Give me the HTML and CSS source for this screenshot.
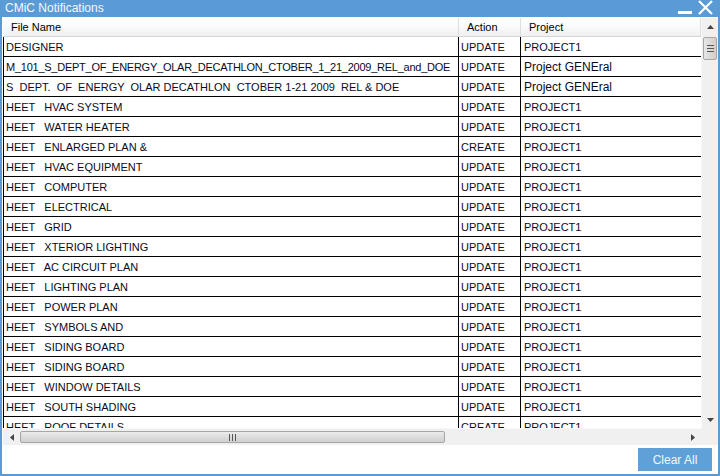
FILE: index.html
```html
<!DOCTYPE html>
<html>
<head>
<meta charset="utf-8">
<link rel="stylesheet" href="styles.css">
</head>
<body>
<div class="window">
  <div class="titlebar">
    <span class="title">CMiC Notifications</span>
    <div class="controls">
      <span class="min"></span>
      <svg class="close" width="15" height="15" viewBox="0 0 15 15"><path d="M1 1 L14 14 M14 1 L1 14" stroke="#fff" stroke-width="2.2" fill="none"/></svg>
    </div>
  </div>
  <div class="content">
    <div class="gridarea">
      <div class="list">
        <div class="head">
          <div class="hc c1">File Name</div>
          <div class="hc c2">Action</div>
          <div class="hc c3">Project</div>
        </div>
        <div class="rows">
          <div class="row"><div class="cell">DESIGNER</div><div class="cell">UPDATE</div><div class="cell">PROJECT1</div></div>
          <div class="row"><div class="cell tight">M_101_S_DEPT_OF_ENERGY_OLAR_DECATHLON_CTOBER_1_21_2009_REL_and_DOE</div><div class="cell">UPDATE</div><div class="cell gen">Project GENEral</div></div>
          <div class="row"><div class="cell">S  DEPT.  OF  ENERGY  OLAR DECATHLON  CTOBER 1-21 2009  REL &amp; DOE</div><div class="cell">UPDATE</div><div class="cell gen">Project GENEral</div></div>
          <div class="row"><div class="cell">HEET   HVAC SYSTEM</div><div class="cell">UPDATE</div><div class="cell">PROJECT1</div></div>
          <div class="row"><div class="cell">HEET   WATER HEATER</div><div class="cell">UPDATE</div><div class="cell">PROJECT1</div></div>
          <div class="row"><div class="cell">HEET   ENLARGED PLAN &amp;</div><div class="cell">CREATE</div><div class="cell">PROJECT1</div></div>
          <div class="row"><div class="cell">HEET   HVAC EQUIPMENT</div><div class="cell">UPDATE</div><div class="cell">PROJECT1</div></div>
          <div class="row"><div class="cell">HEET   COMPUTER</div><div class="cell">UPDATE</div><div class="cell">PROJECT1</div></div>
          <div class="row"><div class="cell">HEET   ELECTRICAL</div><div class="cell">UPDATE</div><div class="cell">PROJECT1</div></div>
          <div class="row"><div class="cell">HEET   GRID</div><div class="cell">UPDATE</div><div class="cell">PROJECT1</div></div>
          <div class="row"><div class="cell">HEET   XTERIOR LIGHTING</div><div class="cell">UPDATE</div><div class="cell">PROJECT1</div></div>
          <div class="row"><div class="cell">HEET   AC CIRCUIT PLAN</div><div class="cell">UPDATE</div><div class="cell">PROJECT1</div></div>
          <div class="row"><div class="cell">HEET   LIGHTING PLAN</div><div class="cell">UPDATE</div><div class="cell">PROJECT1</div></div>
          <div class="row"><div class="cell">HEET   POWER PLAN</div><div class="cell">UPDATE</div><div class="cell">PROJECT1</div></div>
          <div class="row"><div class="cell">HEET   SYMBOLS AND</div><div class="cell">UPDATE</div><div class="cell">PROJECT1</div></div>
          <div class="row"><div class="cell">HEET   SIDING BOARD</div><div class="cell">UPDATE</div><div class="cell">PROJECT1</div></div>
          <div class="row"><div class="cell">HEET   SIDING BOARD</div><div class="cell">UPDATE</div><div class="cell">PROJECT1</div></div>
          <div class="row"><div class="cell">HEET   WINDOW DETAILS</div><div class="cell">UPDATE</div><div class="cell">PROJECT1</div></div>
          <div class="row"><div class="cell">HEET   SOUTH SHADING</div><div class="cell">UPDATE</div><div class="cell">PROJECT1</div></div>
          <div class="row"><div class="cell">HEET   ROOF DETAILS</div><div class="cell">CREATE</div><div class="cell">PROJECT1</div></div>
        </div>
      </div>
      <div class="vscroll">
        <div class="arrow"><svg width="7" height="4" viewBox="0 0 7 4"><path d="M0 4 L3.5 0 L7 4 Z" fill="#444"/></svg></div>
        <div class="vtrack">
          <div class="vthumb"><span class="grip"></span><span class="grip"></span><span class="grip"></span></div>
        </div>
        <div class="arrow"><svg width="7" height="4" viewBox="0 0 7 4"><path d="M0 0 L3.5 4 L7 0 Z" fill="#444"/></svg></div>
      </div>
      <div class="hscroll">
        <div class="harrow"><svg width="4" height="7" viewBox="0 0 4 7"><path d="M4 0 L0 3.5 L4 7 Z" fill="#444"/></svg></div>
        <div class="htrack">
          <div class="hthumb"><span class="hgrip"></span><span class="hgrip"></span><span class="hgrip"></span></div>
        </div>
        <div class="harrow"><svg width="4" height="7" viewBox="0 0 4 7"><path d="M0 0 L4 3.5 L0 7 Z" fill="#444"/></svg></div>
      </div>
      <div class="corner"></div>
    </div>
    <div class="footer">
      <button class="clear">Clear All</button>
    </div>
  </div>
</div>
</body>
</html>
```
FILE: styles.css
```css
html, body {
  margin: 0;
  padding: 0;
}
body {
  width: 720px;
  height: 476px;
  overflow: hidden;
  font-family: "Liberation Sans", Arial, sans-serif;
}
.window {
  width: 720px;
  height: 476px;
  box-sizing: border-box;
  background: #5a9bd6;
  padding: 0 2px 2px 2px;
  display: flex;
  flex-direction: column;
}
.titlebar {
  height: 17px;
  display: flex;
  align-items: center;
  justify-content: space-between;
  color: #fff;
}
.title {
  font-size: 12px;
  line-height: 17px;
  padding-left: 3px;
  color: #f4f8fc;
}
.controls {
  display: flex;
  align-items: flex-start;
  height: 17px;
  gap: 6px;
  padding-right: 5px;
}
.min {
  display: block;
  width: 14px;
  height: 3px;
  background: #fff;
  margin-top: 11px;
}
.close {
  display: block;
  margin-top: 0px;
}
.content {
  flex: 1;
  background: #fff;
  padding-top: 1px;
  padding-left: 1px;
  display: flex;
  flex-direction: column;
  min-height: 0;
}
.gridarea {
  display: grid;
  grid-template-columns: 698px 17px;
  grid-template-rows: 410px 17px;
}
.list {
  overflow: hidden;
  font-size: 11px;
  color: #000;
}
.head {
  display: grid;
  grid-template-columns: 456px 62px 180px;
  height: 19px;
  box-sizing: border-box;
  background: linear-gradient(#ffffff, #fafafa 50%, #eef0f2);
  border-bottom: 1px solid #d6d6d6;
}
.hc {
  line-height: 17px;
  padding-top: 1px;
  padding-left: 8px;
  border-right: 1px solid #dedede;
  white-space: nowrap;
  overflow: hidden;
}
.rows {
  border-left: 1px solid #000;
}
.row {
  display: grid;
  grid-template-columns: 455px 62px 180px;
  height: 20px;
  box-sizing: border-box;
  border-bottom: 1px solid #000;
}
.cell {
  line-height: 18px;
  padding-top: 1px;
  padding-left: 2px;
  white-space: pre;
  overflow: hidden;
  border-right: 1px solid #000;
  color: #0a0a1e;
}
.cell.tight {
  letter-spacing: -0.25px;
}
.cell:last-child {
  border-right: none;
  padding-left: 3px;
}
.cell.gen {
  font-size: 12px;
}
.vscroll {
  background: #f0f0f0;
  display: flex;
  flex-direction: column;
  border-left: 1px solid #f8f8f8;
}
.arrow {
  height: 17px;
  display: flex;
  align-items: center;
  justify-content: center;
}
.vtrack {
  flex: 1;
  padding: 2px 1px;
}
.vthumb {
  height: 23px;
  box-sizing: border-box;
  border: 1px solid #a6a6a6;
  border-radius: 2px;
  background: linear-gradient(90deg, #e6e6e6, #dadada 50%, #cfcfcf);
  display: flex;
  flex-direction: column;
  justify-content: center;
  align-items: center;
  gap: 2px;
}
.grip {
  display: block;
  width: 7px;
  height: 1px;
  background: #555;
}
.hscroll {
  background: #f0f0f0;
  display: flex;
  border-top: 1px solid #f8f8f8;
}
.harrow {
  width: 17px;
  display: flex;
  align-items: center;
  justify-content: center;
}
.htrack {
  flex: 1;
  padding: 2px 0;
}
.hthumb {
  width: 425px;
  height: 100%;
  box-sizing: border-box;
  border: 1px solid #a6a6a6;
  border-radius: 2px;
  background: linear-gradient(#ececec, #dcdcdc 50%, #d0d0d0);
  display: flex;
  justify-content: center;
  align-items: center;
  gap: 2px;
}
.hgrip {
  display: block;
  width: 1px;
  height: 7px;
  background: #555;
}
.corner {
  background: #f0f0f0;
}
.footer {
  flex: 1;
  display: flex;
  justify-content: flex-end;
  align-items: flex-start;
  padding-top: 3px;
  padding-right: 6px;
}
.clear {
  width: 74px;
  height: 23px;
  border: none;
  background: #5fa0d8;
  color: #f2f7fc;
  font-family: "Liberation Sans", Arial, sans-serif;
  font-size: 12px;
  padding: 0;
}
```
